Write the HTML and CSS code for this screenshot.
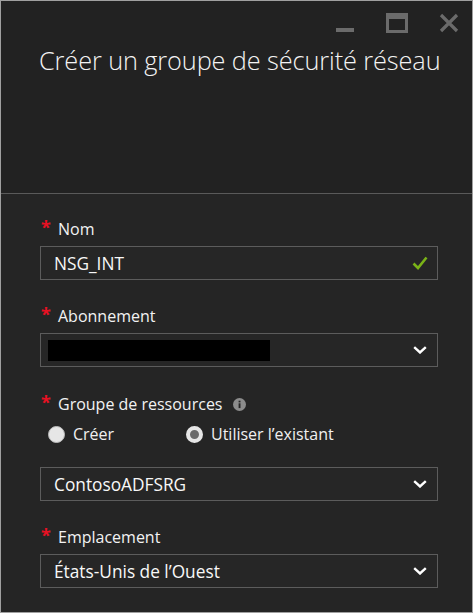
FILE: index.html
```html
<!DOCTYPE html>
<html lang="fr">
<head>
<meta charset="utf-8">
<link rel="stylesheet" href="styles.css">
</head>
<body>
<div class="panel">
  <header class="head">
    <div class="controls">
      <svg class="ctl" width="20" height="20" viewBox="0 0 20 20"><rect x="1" y="15" width="18" height="4" fill="#6b6b6b"/></svg>
      <svg class="ctl" width="22" height="20" viewBox="0 0 22 20"><rect x="1.5" y="1.5" width="19" height="17" fill="none" stroke="#6b6b6b" stroke-width="3"/><rect x="1" y="1" width="20" height="5" fill="#6b6b6b"/></svg>
      <svg class="ctl" width="20" height="20" viewBox="0 0 20 20"><path d="M2 2 L18 18 M18 2 L2 18" stroke="#6b6b6b" stroke-width="3.2"/></svg>
    </div>
    <h1 class="title">Créer un groupe de sécurité réseau</h1>
  </header>
  <main class="form">
    <div class="label"><span class="req">*</span>Nom</div>
    <div class="field">
      <span class="val">NSG_INT</span>
      <svg width="16" height="14" viewBox="0 0 16 14"><path d="M1.5 7.5 L6 12 L14.5 1.5" fill="none" stroke="#7ab317" stroke-width="2.6"/></svg>
    </div>

    <div class="label l2"><span class="req">*</span>Abonnement</div>
    <div class="field sel">
      <span class="redact"></span>
      <svg class="chev" width="14" height="8" viewBox="0 0 14 8"><path d="M1.2 1.2 L7 6.5 L12.8 1.2" fill="none" stroke="#fff" stroke-width="2.4"/></svg>
    </div>

    <div class="label l3"><span class="req">*</span>Groupe de ressources
      <svg class="info" width="13" height="13" viewBox="0 0 13 13"><circle cx="6.5" cy="6.5" r="6.5" fill="#8c8c8c"/><rect x="5.6" y="5.3" width="1.9" height="4.8" fill="#262626"/><rect x="5.6" y="2.7" width="1.9" height="1.7" fill="#262626"/></svg>
    </div>
    <div class="radios">
      <label class="radio"><span class="dot"></span>Créer</label>
      <label class="radio on"><span class="dot"></span>Utiliser l’existant</label>
    </div>
    <div class="field sel f3">
      <span class="val">ContosoADFSRG</span>
      <svg class="chev" width="14" height="8" viewBox="0 0 14 8"><path d="M1.2 1.2 L7 6.5 L12.8 1.2" fill="none" stroke="#fff" stroke-width="2.4"/></svg>
    </div>

    <div class="label l4"><span class="req">*</span>Emplacement</div>
    <div class="field sel">
      <span class="val">États-Unis de l’Ouest</span>
      <svg class="chev" width="14" height="8" viewBox="0 0 14 8"><path d="M1.2 1.2 L7 6.5 L12.8 1.2" fill="none" stroke="#fff" stroke-width="2.4"/></svg>
    </div>
  </main>
</div>
</body>
</html>
```
FILE: styles.css
```css
html, body {
  margin: 0;
  padding: 0;
  background: #252525;
}
body {
  font-family: "Open Sans", "Noto Sans", "DejaVu Sans", sans-serif;
  color: #f0f0f0;
}
.panel {
  box-sizing: border-box;
  width: 473px;
  height: 613px;
  border: 1px solid #a0a0a0;
  background: #252525;
  display: flex;
  flex-direction: column;
}
.head {
  box-sizing: border-box;
  height: 193px;
  background: #222222;
  border-bottom: 1px solid #5a5a5a;
  padding: 12px 13px 0 38px;
}
.controls {
  display: flex;
  justify-content: flex-end;
  align-items: flex-start;
  gap: 31px;
  height: 20px;
}
.title {
  margin: 10px 0 0 0;
  font-weight: 300;
  font-size: 25.3px;
  line-height: 34px;
  color: #f4f4f4;
  letter-spacing: -0.1px;
  white-space: nowrap;
}
.form {
  padding: 25px 34px 0 39px;
  display: flex;
  flex-direction: column;
}
.label {
  height: 20px;
  line-height: 20px;
  font-size: 16px;
  display: flex;
  align-items: center;
  color: #f2f2f2;
}
.req {
  color: #e81123;
  font-weight: 700;
  font-size: 18px;
  width: 17px;
  position: relative;
  top: -2px;
  padding-left: 1px;
}
.info { margin-left: 10px; }
.field {
  box-sizing: border-box;
  margin-top: 7px;
  height: 34px;
  border: 1px solid #5c5c5c;
  background: #262626;
  display: flex;
  align-items: center;
  justify-content: space-between;
  padding: 0 9px 0 13px;
}
.val {
  font-size: 17.3px;
  color: #f8f8f8;
}
.sel { padding-right: 10px; }
.redact {
  display: block;
  margin-left: -6px;
  width: 222px;
  height: 21px;
  background: #000;
}
.l2 { margin-top: 26px; }
.l3 { margin-top: 27px; }
.l4 { margin-top: 26px; }
.radios {
  margin-top: 10px;
  height: 20px;
  display: flex;
  align-items: center;
  padding-left: 8px;
  font-size: 16px;
}
.radio {
  display: flex;
  align-items: center;
  gap: 8px;
  white-space: nowrap;
  flex: none;
  width: 138px;
}
.radio.on { width: auto; }
.dot {
  box-sizing: border-box;
  flex: none;
  width: 17px;
  height: 17px;
  border-radius: 50%;
  background: #e6e6e6;
  border: 1px solid #bcbcbc;
}
.on .dot {
  background: #6a6a6a;
  border: 4px solid #e6e6e6;
}
.f3 { margin-top: 23px; }
```
